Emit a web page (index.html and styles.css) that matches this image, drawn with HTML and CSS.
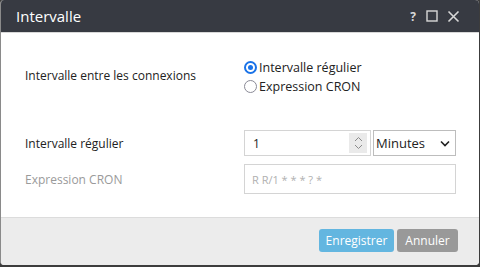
FILE: index.html
```html
<!DOCTYPE html>
<html lang="fr">
  <head>
    <meta charset="UTF-8" />
    <title>Intervalle</title>
    <link rel="stylesheet" href="styles.css">
  </head>
  <body>
    <div class="dialog">
      <header class="dialog-title">
        <h1>Intervalle</h1>
        <div class="title-tools">
          <span class="tool-help">?</span>
          <svg width="12" height="12" viewBox="0 0 12 12"><rect x="1" y="1" width="10" height="10" fill="none" stroke="#d8d8d8" stroke-width="1.4"/></svg>
          <svg width="13" height="13" viewBox="0 0 13 13"><path d="M1.5 1.5 L11.5 11.5 M11.5 1.5 L1.5 11.5" stroke="#d8d8d8" stroke-width="1.6"/></svg>
        </div>
      </header>

      <div class="dialog-body">
        <div class="form-row row-mode">
          <label class="field-label">Intervalle entre les connexions</label>
          <div class="radio-group">
            <label class="radio checked"><span class="radio-dot"></span>Intervalle régulier</label>
            <label class="radio"><span class="radio-dot"></span>Expression CRON</label>
          </div>
        </div>

        <div class="form-row row-interval">
          <label class="field-label">Intervalle régulier</label>
          <div class="field-controls">
            <div class="number-input">
              <span>1</span>
              <span class="spinner">
                <svg width="9" height="14" viewBox="0 0 9 14"><path d="M1 5 L4.5 1.5 L8 5 M1 9 L4.5 12.5 L8 9" fill="none" stroke="#8a8a8a" stroke-width="1"/></svg>
              </span>
            </div>
            <div class="select">
              <span>Minutes</span>
              <svg width="10" height="7" viewBox="0 0 10 7"><path d="M1 1.5 L5 5.5 L9 1.5" fill="none" stroke="#222" stroke-width="1.6"/></svg>
            </div>
          </div>
        </div>

        <div class="form-row row-cron">
          <label class="field-label disabled">Expression CRON</label>
          <div class="text-input disabled">R R/1 * * * ? *</div>
        </div>
      </div>

      <footer class="dialog-footer">
        <button class="btn btn-primary">Enregistrer</button>
        <button class="btn btn-cancel">Annuler</button>
      </footer>
    </div>
  </body>
</html>
```

FILE: styles.css
```css
/* General Styles */
body {
  margin: 0;
  padding: 0;
  background: #3c3c3c;
  font-family: "Open Sans", "Noto Sans", sans-serif;
  color: #222;
}

.dialog {
  width: 478px;
  height: 265px;
  display: flex;
  flex-direction: column;
  background: #fff;
  border-left: 1px solid #8a8a8a;
  border-radius: 4px;
  overflow: hidden;
}

/* Title bar */
.dialog-title {
  height: 32px;
  background: #373a42;
  border-bottom: 1px solid #d8d8d8;
  display: flex;
  align-items: center;
  padding: 0 0 0 15px;
}

.dialog-title h1 {
  margin: 0;
  font-size: 15px;
  font-weight: normal;
  color: #fff;
  flex: 1;
}

.title-tools {
  display: flex;
  align-items: center;
  gap: 9px;
  margin-right: 19px;
}

.tool-help {
  color: #d8d8d8;
  font-weight: bold;
  font-size: 12px;
  margin-right: 1px;
}

/* Body */
.dialog-body {
  flex: 1;
  padding: 24px 23px 0 24px;
}

.form-row {
  display: flex;
  align-items: center;
}

.field-label {
  width: 219px;
  font-size: 12px;
}

.field-label.disabled {
  color: #9a9a9a;
}

.row-mode {
  height: 40px;
}

.row-mode .field-label {
  margin-top: -3px;
}

.radio-group {
  display: flex;
  flex-direction: column;
  gap: 3px;
}

.radio {
  display: flex;
  align-items: center;
  font-size: 12.5px;
  height: 16px;
}

.radio-dot {
  width: 11px;
  height: 11px;
  border: 1px solid #8a8a96;
  border-radius: 50%;
  margin-right: 2px;
  box-sizing: content-box;
  position: relative;
}

.radio.checked .radio-dot {
  border: 2px solid #1a73e8;
  width: 9px;
  height: 9px;
}

.radio.checked .radio-dot::after {
  content: "";
  position: absolute;
  left: 2px;
  top: 2px;
  width: 5px;
  height: 5px;
  border-radius: 50%;
  background: #1a73e8;
}

.row-interval {
  margin-top: 33px;
  height: 26px;
}

.field-controls {
  display: flex;
  gap: 2px;
}

.number-input,
.select,
.text-input {
  box-sizing: border-box;
  border: 1px solid #d4d4d4;
  height: 26px;
  display: flex;
  align-items: center;
  font-size: 12px;
}

.number-input {
  width: 127px;
  padding-left: 8px;
  justify-content: space-between;
}

.spinner {
  width: 18px;
  height: 20px;
  background: #eaeaea;
  display: flex;
  align-items: center;
  justify-content: center;
  margin-right: 3px;
}

.select {
  width: 83px;
  padding: 0 5px 0 2px;
  justify-content: space-between;
  font-size: 13px;
  border-color: #bdbdbd;
}

.row-cron {
  margin-top: 8px;
  height: 30px;
}

.text-input {
  width: 212px;
  height: 30px;
  padding-left: 7px;
}

.text-input.disabled {
  color: #b0b0b0;
  font-size: 11px;
}

/* Footer */
.dialog-footer {
  height: 48px;
  box-sizing: border-box;
  background: #ececec;
  border-top: 1px solid #dcdcdc;
  display: flex;
  justify-content: flex-end;
  align-items: center;
  gap: 3px;
  padding: 0 21px 2px 0;
}

.btn {
  height: 23px;
  border: none;
  border-radius: 3px;
  color: #fff;
  font-family: "Open Sans", "Noto Sans", sans-serif;
  font-size: 12px;
  padding: 0 6px;
}

.btn-primary {
  background: #63b6e0;
  width: 75px;
}

.btn-cancel {
  background: #999;
  width: 61px;
}
```
